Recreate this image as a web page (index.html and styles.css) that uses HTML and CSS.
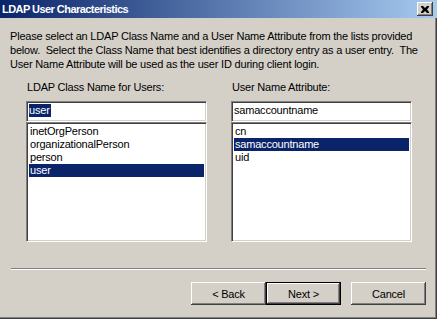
FILE: index.html
```html
<!DOCTYPE html>
<html lang="en">
<head>
    <meta charset="UTF-8">
    <title>LDAP User Characteristics</title>
    <link rel="stylesheet" href="styles.css">
</head>
<body>
    <div class="window">
        <div class="titlebar">
            <span class="title">LDAP User Characteristics</span>
            <span class="close">
                <svg width="8" height="7" viewBox="0 0 8 7">
                    <path d="M0 0h2l2 2 2-2h2v1l-2 2.5 2 2.5v1h-2l-2-2-2 2h-2v-1l2-2.5-2-2.5z" fill="#000"/>
                </svg>
            </span>
        </div>

        <div class="content">
            <p class="intro">Please select an LDAP Class Name and a User Name Attribute from the lists provided below.&nbsp; Select the Class Name that best identifies a directory entry as a user entry.&nbsp; The User Name Attribute will be used as the user ID during client login.</p>

            <div class="columns">
                <div class="column">
                    <div class="label">LDAP Class Name for Users:</div>
                    <div class="textbox"><span class="sel-text">user</span></div>
                    <ul class="listbox">
                        <li>inetOrgPerson</li>
                        <li>organizationalPerson</li>
                        <li>person</li>
                        <li class="selected">user</li>
                    </ul>
                </div>
                <div class="column">
                    <div class="label">User Name Attribute:</div>
                    <div class="textbox">samaccountname</div>
                    <ul class="listbox">
                        <li>cn</li>
                        <li class="selected">samaccountname</li>
                        <li>uid</li>
                    </ul>
                </div>
            </div>

            <div class="separator"></div>

            <div class="buttons">
                <button class="btn">&lt; Back</button>
                <button class="btn default">Next &gt;</button>
                <button class="btn cancel">Cancel</button>
            </div>
        </div>
    </div>
</body>
</html>
```

FILE: styles.css
```css
* {
    box-sizing: border-box;
}

body {
    margin: 0;
    font-family: 'Liberation Sans', Arial, sans-serif;
    font-size: 11px;
    letter-spacing: -0.2px;
    color: #000;
}

.window {
    width: 437px;
    height: 319px;
    background: #d4d0c8;
    display: flex;
    flex-direction: column;
    box-shadow: inset -1px -1px 0 #404040, inset -2px -2px 0 #808080;
}

.titlebar {
    height: 18px;
    background: linear-gradient(90deg, #0a246a, #a6caf0);
    display: flex;
    align-items: center;
    justify-content: space-between;
    padding: 0 4px 0 2px;
}

.title {
    color: #fff;
    font-family: 'Liberation Sans', Arial, sans-serif;
    font-weight: bold;
    font-size: 11px;
    letter-spacing: -0.55px;
}

.close {
    width: 16px;
    height: 14px;
    background: #d4d0c8;
    display: flex;
    align-items: center;
    justify-content: center;
    box-shadow: inset -1px -1px 0 #404040, inset 1px 1px 0 #fff, inset -2px -2px 0 #808080;
}

.content {
    padding: 11px 11px 0 11px;
    flex: 1;
    display: flex;
    flex-direction: column;
}

.intro {
    margin: 0 0 0 -1px;
    line-height: 14px;
    width: 424px;
}

.columns {
    display: flex;
    gap: 24px;
    margin-top: 9px;
    padding-left: 15px;
}

.column {
    width: 181px;
    display: flex;
    flex-direction: column;
}

.label {
    line-height: 14px;
    height: 21px;
    padding-left: 1px;
}

.textbox,
.listbox {
    background: #fff;
    border: 1px solid;
    border-color: #808080 #fff #fff #808080;
    box-shadow: inset 1px 1px 0 #404040, inset -1px -1px 0 #d4d0c8;
}

.textbox {
    height: 21px;
    padding: 2px 0 0 2px;
    line-height: 13px;
}

.sel-text {
    background: #0a246a;
    color: #fff;
    display: inline-block;
    padding-right: 1px;
}

.listbox {
    list-style: none;
    margin: 0;
    height: 120px;
    padding: 2px;
}

.listbox li {
    height: 13px;
    line-height: 13px;
    padding-left: 1px;
}

.listbox li.selected {
    background: #0a246a;
    color: #fff;
}

.separator {
    margin-top: 26px;
    height: 2px;
    border-top: 1px solid #808080;
    border-bottom: 1px solid #fff;
    width: 415px;
}

.buttons {
    display: flex;
    justify-content: flex-end;
    margin-top: 12px;
    width: 415px;
}

.btn {
    width: 75px;
    height: 23px;
    background: #d4d0c8;
    border: none;
    padding: 0;
    font-family: 'Liberation Sans', Arial, sans-serif;
    font-size: 11px;
    letter-spacing: -0.2px;
    color: #000;
    box-shadow: inset -1px -1px 0 #404040, inset 1px 1px 0 #fff, inset -2px -2px 0 #808080;
}

.btn.default {
    box-shadow: inset 0 0 0 1px #000, inset -2px -2px 0 #404040, inset 2px 2px 0 #fff, inset -3px -3px 0 #808080;
}

.btn.cancel {
    margin-left: 10px;
}
```
